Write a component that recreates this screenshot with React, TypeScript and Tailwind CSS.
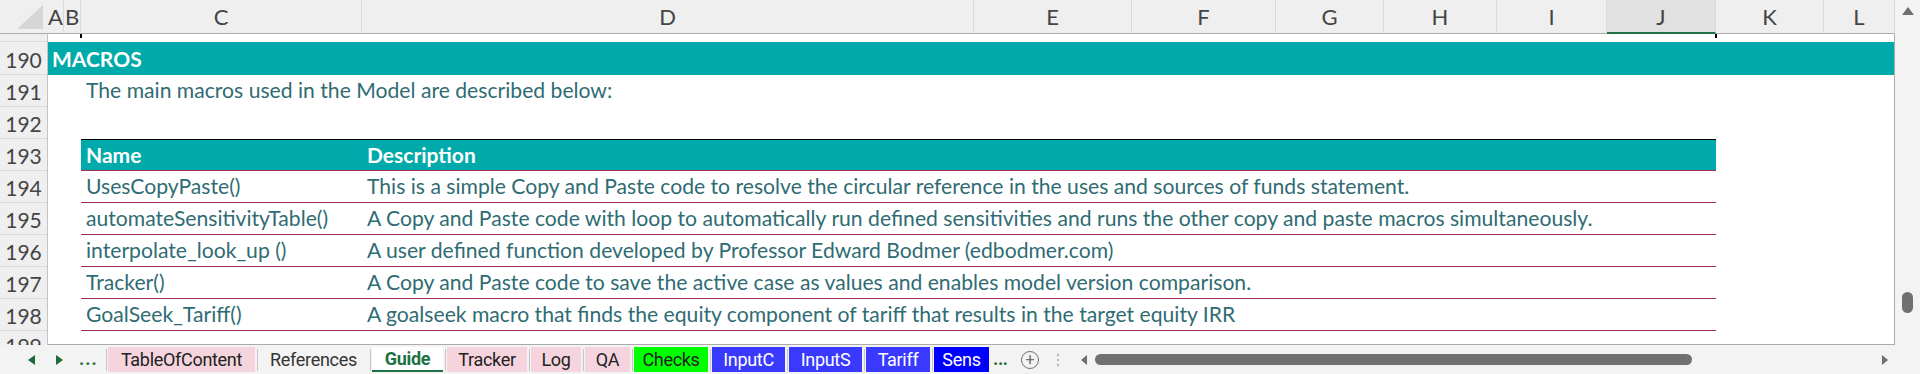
import React from "react";

const columns = [
  { label: "A", w: 16 },
  { label: "B", w: 17 },
  { label: "C", w: 281 },
  { label: "D", w: 612 },
  { label: "E", w: 158 },
  { label: "F", w: 144 },
  { label: "G", w: 108 },
  { label: "H", w: 113 },
  { label: "I", w: 110 },
  { label: "J", w: 109, selected: true },
  { label: "K", w: 108 },
  { label: "L", w: 71 },
];

const macros = [
  {
    name: "UsesCopyPaste()",
    desc: "This is a simple Copy and Paste code to resolve the circular reference in the uses and sources of funds statement.",
  },
  {
    name: "automateSensitivityTable()",
    desc: "A Copy and Paste code with loop to automatically run defined sensitivities and runs the other copy and paste macros simultaneously.",
  },
  {
    name: "interpolate_look_up ()",
    desc: "A user defined function developed by Professor Edward Bodmer (edbodmer.com)",
  },
  {
    name: "Tracker()",
    desc: "A Copy and Paste code to save the active case as values and enables model version comparison.",
  },
  {
    name: "GoalSeek_Tariff()",
    desc: "A goalseek macro that finds the equity component of tariff that results in the target equity IRR",
  },
];

const tabs = [
  { label: "TableOfContent", w: 147, cls: "bg-[#f5d4dd] text-[#222]" },
  { label: "References", w: 109, cls: "text-[#333]" },
  { label: "Guide", w: 71, cls: "bg-white text-[#1e7145] font-bold border-b-2 border-[#1e7145]" },
  { label: "Tracker", w: 80, cls: "bg-[#f5d4dd] text-[#222]" },
  { label: "Log", w: 50, cls: "bg-[#f5d4dd] text-[#222]" },
  { label: "QA", w: 45, cls: "bg-[#f5d4dd] text-[#222]" },
  { label: "Checks", w: 74, cls: "bg-[#00ff00] text-[#222]" },
  { label: "InputC", w: 73, cls: "bg-[#3a3aff] text-white" },
  { label: "InputS", w: 73, cls: "bg-[#3a3aff] text-white" },
  { label: "Tariff", w: 64, cls: "bg-[#3a3aff] text-white" },
  { label: "Sens", w: 55, cls: "bg-[#0000ff] text-white" },
];

const rowNums = [190, 191, 192, 193, 194, 195, 196, 197, 198];

const cellText = "text-[21.15px] leading-none text-[#2f6c73]";

export default function App() {
  return (
    <div className="w-[1920px] h-[374px] overflow-hidden bg-white font-[Lato,sans-serif] flex flex-col">
      {/* column headers */}
      <div className="flex h-[34px] shrink-0">
        <div className="w-[48px] h-[34px] bg-[#efefef] border-b border-[#ababab] flex items-start justify-start">
          <svg width="48" height="33" viewBox="0 0 48 33">
            <polygon points="43,5 43,29 17,29" fill="#d6d6d6" />
          </svg>
        </div>
        {columns.map((c) => (
          <div
            key={c.label}
            style={{ width: c.w }}
            className={`relative h-[34px] flex items-center justify-center border-r border-[#dadada] text-[22px] text-[#444] ${
              c.selected
                ? "bg-[#e1e1e1] border-b-2 border-b-[#1e7145]"
                : "bg-[#efefef] border-b border-b-[#ababab]"
            }`}
          >
            {c.label}
            {c.label === "B" && (
              <span className="absolute right-[-2px] bottom-[-5px] w-[2px] h-[4px] bg-black" />
            )}
            {c.label === "J" && (
              <span className="absolute right-[-2px] bottom-[-6px] w-[2px] h-[4px] bg-black" />
            )}
          </div>
        ))}
        <div className="flex-1 bg-[#f3f3f3] flex justify-center pt-[7px]">
          <svg width="12" height="8" viewBox="0 0 12 8">
            <polygon points="6,0 12,8 0,8" fill="#6f6f6f" />
          </svg>
        </div>
      </div>

      {/* sheet body */}
      <div className="flex h-[311px] shrink-0">
        <div className="w-[48px] bg-[#efefef] border-r border-[#c4c4c4] flex flex-col text-[21px] text-[#444]">
          <div className="h-[8px] border-b border-[#dadada]" />
          {rowNums.map((n, i) => (
            <div
              key={n}
              className={`${i === 0 ? "h-[33px]" : "h-[32px]"} border-b border-[#dadada] flex items-end justify-center pb-[4px] leading-none`}
            >
              {n}
            </div>
          ))}
          <div className="flex-1 flex justify-center leading-none pt-[4px] overflow-hidden">199</div>
        </div>

        <div className="w-[1847px] border-r border-[#ababab] border-b flex flex-col">
          <div className="h-[8px]" />
          <div className="h-[33px] bg-[#00aaaa] flex items-end pl-[4px] pb-[6px]">
            <span className="text-[21px] leading-none font-bold text-white">MACROS</span>
          </div>
          <div className="h-[32px] flex items-end pl-[38px] pb-[6px]">
            <span className={cellText}>The main macros used in the Model are described below:</span>
          </div>
          <div className="h-[32px]" />
          <div className="ml-[33px] w-[1635px] flex flex-col">
            <div className="h-[32px] bg-[#00aaaa] border-t border-black border-b border-b-[#9e2f55] flex items-end pb-[5px] text-[21px] leading-none font-bold text-white">
              <div className="w-[281px] pl-[5px]">Name</div>
              <div className="pl-[5px]">Description</div>
            </div>
            {macros.map((m) => (
              <div
                key={m.name}
                className={`h-[32px] border-b border-[#9e2f55] flex items-end pb-[5px] ${cellText}`}
              >
                <div className="w-[281px] pl-[5px]">{m.name}</div>
                <div className="pl-[5px] whitespace-nowrap">{m.desc}</div>
              </div>
            ))}
          </div>
        </div>

        <div className="flex-1 bg-[#f3f3f3] flex flex-col items-center pt-[258px]">
          <div className="w-[11px] h-[21px] rounded-full bg-[#707070]" />
        </div>
      </div>

      {/* sheet tabs */}
      <div className="flex-1 bg-[#f3f3f3] flex items-stretch font-[Roboto,sans-serif] text-[18px] tracking-[-0.3px]">
        <div className="w-[104px] flex items-center">
          <svg className="ml-[28px]" width="7" height="10" viewBox="0 0 7 10">
            <polygon points="7,0 7,10 0,5" fill="#1e6b3a" />
          </svg>
          <svg className="ml-[21px]" width="7" height="10" viewBox="0 0 7 10">
            <polygon points="0,0 7,5 0,10" fill="#1e6b3a" />
          </svg>
          <span className="ml-[16px] text-[#1e6b3a] font-bold tracking-[1px] leading-none pb-[2px]">...</span>
        </div>
        <div className="flex items-stretch pt-[2px] pb-[2px]">
          {tabs.map((t) => (
            <React.Fragment key={t.label}>
              <div className="w-px self-center h-[22px] bg-[#c6c6c6] mx-[1.5px]" />
              <div
                style={{ width: t.w }}
                className={`flex items-center justify-center leading-none ${t.cls}`}
              >
                {t.label}
              </div>
            </React.Fragment>
          ))}
        </div>
        <span className="ml-[4px] self-center text-[#1e6b3a] font-bold leading-none pb-[2px]">...</span>
        <div className="ml-[13px] self-center w-[18px] h-[18px] rounded-full border border-[#6f6f6f] flex items-center justify-center text-[#6f6f6f] text-[16px] leading-none">
          +
        </div>
        <div className="ml-[18px] self-center flex flex-col gap-[3px]">
          <span className="w-[2px] h-[2px] bg-[#b5b5b5]" />
          <span className="w-[2px] h-[2px] bg-[#b5b5b5]" />
          <span className="w-[2px] h-[2px] bg-[#b5b5b5]" />
        </div>
        <svg className="ml-[22px] self-center" width="6" height="10" viewBox="0 0 6 10">
          <polygon points="6,0 6,10 0,5" fill="#6f6f6f" />
        </svg>
        <div className="ml-[8px] self-center w-[597px] h-[11px] rounded-full bg-[#707070]" />
        <svg className="ml-[190px] self-center" width="6" height="10" viewBox="0 0 6 10">
          <polygon points="0,0 6,5 0,10" fill="#6f6f6f" />
        </svg>
      </div>
    </div>
  );
}
